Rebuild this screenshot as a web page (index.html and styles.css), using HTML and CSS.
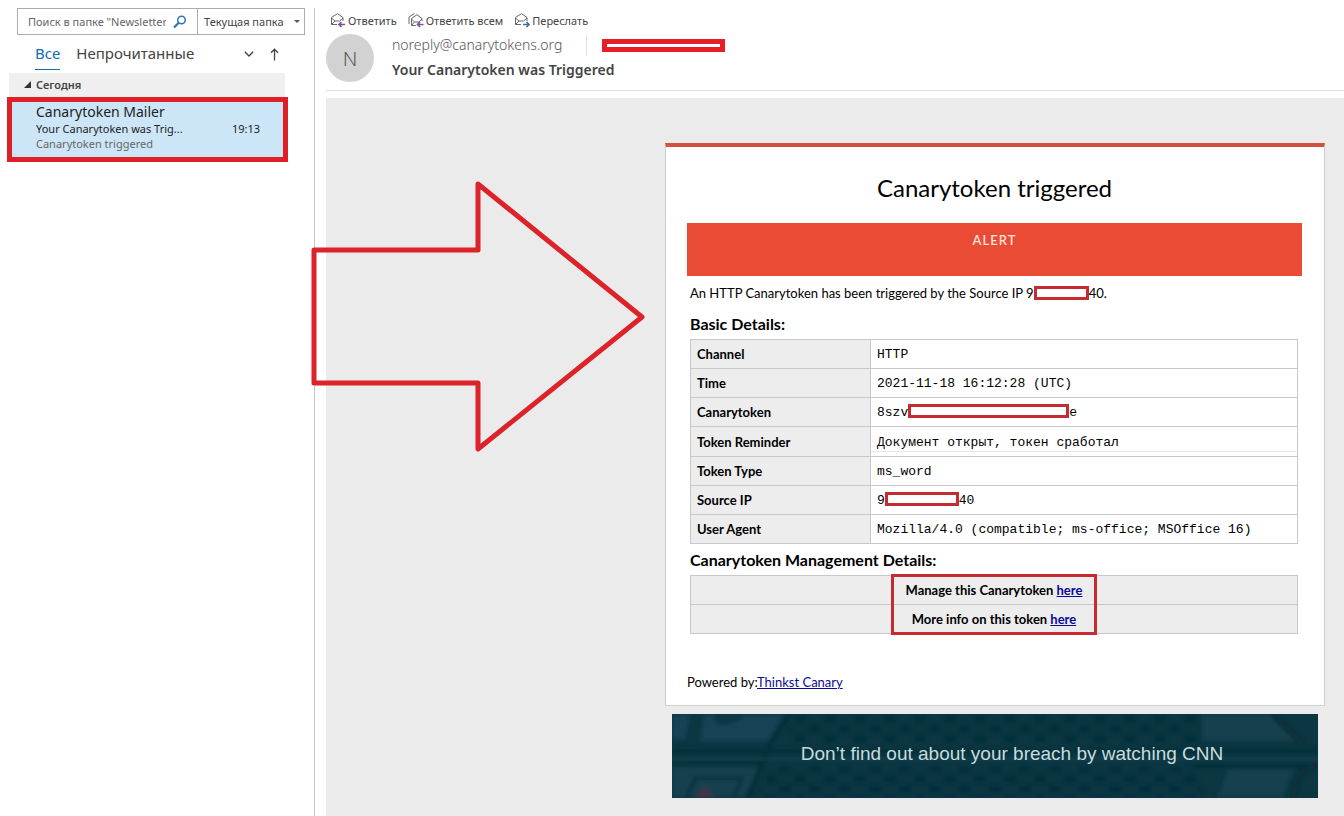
FILE: index.html
```html
<!DOCTYPE html>
<html lang="ru">
<head>
    <meta charset="UTF-8">
    <meta name="viewport" content="width=device-width, initial-scale=1.0">
    <title>Your Canarytoken was Triggered</title>
    <link rel="stylesheet" href="styles.css">
</head>
<body>
    <aside class="sidebar">
        <form class="search">
            <input class="search-input" type="text" aria-label="Поиск" placeholder="Поиск в папке &quot;Newsletters&quot;">
            <button class="search-button" type="button" aria-label="Найти">
                <svg width="14" height="14" viewBox="0 0 14 14" fill="none" stroke="#2e74b5">
                    <circle cx="8.5" cy="5" r="3.8" stroke-width="1.5"/>
                    <path d="M5.7 7.8L1 12.5" stroke-width="2.2"/>
                </svg>
            </button>
            <div class="scope">
                <select class="scope-select" aria-label="Где искать">
                    <option>Текущая папка</option>
                </select>
                <svg class="scope-arrow" width="6" height="3" viewBox="0 0 6 3"><path d="M0 0h6L3 3z" fill="#555"/></svg>
            </div>
        </form>

        <div class="tabs">
            <button class="tab active" type="button">Все</button>
            <button class="tab" type="button">Непрочитанные</button>
            <button class="sort first" type="button" aria-label="Упорядочить">
                <svg width="10" height="6" viewBox="0 0 10 6" fill="none" stroke="#444" stroke-width="1.4"><path d="M.8.8L5 5 9.2.8"/></svg>
            </button>
            <button class="sort" type="button" aria-label="По возрастанию">
                <svg width="9" height="13" viewBox="0 0 9 13" fill="none" stroke="#444" stroke-width="1.3"><path d="M4.5 12.5V1.2M1 4.7L4.5 1.2 8 4.7"/></svg>
            </button>
        </div>

        <div class="group">
            <svg width="7" height="7" viewBox="0 0 7 7"><path d="M7 0v7H0z" fill="#333"/></svg>
            <span>Сегодня</span>
        </div>

        <a class="message" href="#mail">
            <span class="message-from">Canarytoken Mailer</span>
            <span class="message-row">
                <span>Your Canarytoken was Trig...</span>
                <span class="message-time">19:13</span>
            </span>
            <span class="message-preview">Canarytoken triggered</span>
        </a>
    </aside>

    <main class="reading" id="mail">
        <header class="mail-header">
            <div class="actions">
                <button class="action" type="button">
                    <svg width="16" height="15" viewBox="0 0 16 15" fill="none">
                        <path d="M7 11.5H1.500V4.500L7.500.7l5.500 3.800V8M1.500 5l3.500 3h4.500L13 5M1.500 11.500L5 8" stroke="#666"/>
                        <path d="M15 11.500H9M11.500 9L9 11.500l2.500 2.500" stroke="#7a52a0" stroke-width="1.700"/>
                    </svg>
                    Ответить
                </button>
                <button class="action" type="button">
                    <svg width="16" height="15" viewBox="0 0 16 15" fill="none">
                        <path d="M8 12.500H3.500V5.500L9 1.700l5 3.800V8M3.500 6l3 3h4.500L14 6M3.500 12.500L6.500 9M1 11V4L6.500.5" stroke="#666"/>
                        <path d="M15.500 11.500h-6M12 9l-2.500 2.500L12 14" stroke="#7a52a0" stroke-width="1.700"/>
                    </svg>
                    Ответить всем
                </button>
                <button class="action" type="button">
                    <svg width="16" height="15" viewBox="0 0 16 15" fill="none">
                        <path d="M7 11.500H1.500V4.500L7.500.7l5.500 3.800V8M1.500 5l3.500 3h4.500L13 5M1.500 11.500L5 8" stroke="#666"/>
                        <path d="M9 11.500h6M12.500 9l2.500 2.500-2.500 2.500" stroke="#41719c" stroke-width="1.700"/>
                    </svg>
                    Переслать
                </button>
            </div>
            <div class="sender">
                <div class="avatar">N</div>
                <div class="sender-text">
                    <div class="sender-row">
                        <span class="sender-mail">noreply@canarytokens.org</span>
                        <span class="hidden-name"></span>
                    </div>
                    <h1 class="subject">Your Canarytoken was Triggered</h1>
                </div>
            </div>
        </header>

        <section class="mail-body">
            <article class="card">
                <h2 class="card-title">Canarytoken triggered</h2>
                <div class="alert">ALERT</div>

                <div class="details">
                    <p class="intro">An HTTP Canarytoken has been triggered by the Source IP 9<span class="hidden-data ip-short"></span>40.</p>

                    <h3 class="details-title">Basic Details:</h3>
                    <table class="data">
                        <tr><th scope="row">Channel</th><td>HTTP</td></tr>
                        <tr><th scope="row">Time</th><td>2021-11-18 16:12:28 (UTC)</td></tr>
                        <tr><th scope="row">Canarytoken</th><td>8szv<span class="hidden-data token"></span>e</td></tr>
                        <tr><th scope="row">Token Reminder</th><td class="reminder">Документ открыт, токен сработал</td></tr>
                        <tr><th scope="row">Token Type</th><td>ms_word</td></tr>
                        <tr><th scope="row">Source IP</th><td>9<span class="hidden-data ip"></span>40</td></tr>
                        <tr><th scope="row">User Agent</th><td>Mozilla/4.0 (compatible; ms-office; MSOffice 16)</td></tr>
                    </table>

                    <h3 class="details-title">Canarytoken Management Details:</h3>
                    <div class="manage">
                        <table class="data">
                            <tr><th class="manage-cell">Manage this Canarytoken <a href="#manage">here</a></th></tr>
                            <tr><th class="manage-cell">More info on this token <a href="#info">here</a></th></tr>
                        </table>
                        <div class="manage-mark"></div>
                    </div>
                </div>

                <p class="powered">Powered by:<a href="#canary">Thinkst Canary</a></p>
            </article>

            <div class="banner">
                <svg class="banner-art" viewBox="0 0 646 84" preserveAspectRatio="none" aria-hidden="true">
                    <defs>
                        <filter id="soft"><feGaussianBlur stdDeviation="2"/></filter>
                        <pattern id="cells" width="30" height="20" patternUnits="userSpaceOnUse">
                            <ellipse cx="8" cy="5" rx="7" ry="4" fill="#062f3b"/>
                            <ellipse cx="23" cy="15" rx="7" ry="4" fill="#062f3b"/>
                        </pattern>
                    </defs>
                    <rect width="646" height="84" fill="#0b3642"/>
                    <g filter="url(#soft)">
                        <path d="M125 0h400v28H110z" fill="url(#cells)"/>
                        <path d="M100 53h420l15 31H85z" fill="url(#cells)"/>
                        <path d="M0 0h18l-5 26H0zM32 0h80L96 27H28z" fill="#184355"/>
                        <path d="M42 0h30q-8 14-28 10z" fill="#0e3542"/>
                        <path d="M0 52h90L72 84H0z" fill="#173f4e"/>
                        <path d="M14 84l10-20h46l-9 20" fill="none" stroke="#0c3340" stroke-width="4"/>
                        <path d="M24 84l8-12 11 12z" fill="#44304a"/>
                        <path d="M0 37h646M0 50h90M520 52h126M118 0L98 30 76 84" fill="none" stroke="#052d38" stroke-width="4"/>
                        <path d="M530 0h75l22 27h-97zM545 84l12-29h65l-12 29z" fill="#123f4e"/>
                        <path d="M600 0l30 30M646 50q-24 5-24 34" fill="none" stroke="#082d39" stroke-width="5"/>
                        <path d="M0 45h646" stroke="#113f4b" stroke-width="3"/>
                    </g>
                </svg>
                <span class="banner-text">Don’t find out about your breach by watching CNN</span>
            </div>
        </section>
    </main>

    <svg class="big-arrow" width="336" height="272" viewBox="0 0 336 272" fill="none" aria-hidden="true">
        <path d="M4 69H168V3L332 136 168 268V202H4z" stroke="#dc2329" stroke-width="5" stroke-linejoin="round"/>
    </svg>
</body>
</html>
```
FILE: styles.css
```css
* {
    box-sizing: border-box;
}

body {
    display: flex;
    min-height: 100vh;
    margin: 0;
    position: relative;
    background-color: #FFFFFF;
    color: #444444;
    font-family: "Noto Sans", "Open Sans", sans-serif;
}

button,
input,
select {
    margin: 0;
    padding: 0;
    border: none;
    background: none;
    color: inherit;
    font-family: inherit;
}

button {
    cursor: pointer;
}

svg {
    display: block;
    flex: none;
}

/* message list */
.sidebar {
    flex: none;
    width: 315px;
    margin-top: 8px;
    border-right: 1px solid #C8C8C8;
}

.search {
    display: flex;
    height: 27px;
    margin: 0 9px 0 17px;
    border: 1px solid #ABABAB;
}

.search-input {
    flex: 1;
    min-width: 0;
    padding-left: 10px;
    font-size: 11px;
}

.search-input::placeholder {
    color: #666666;
}

.search-button {
    padding: 0 10px 0 7px;
}

.scope {
    display: flex;
    align-items: center;
    width: 107px;
    padding: 0 4px 0 6px;
    border-left: 1px solid #ABABAB;
}

.scope-select {
    flex: 1;
    min-width: 0;
    appearance: none;
    font-size: 11px;
}

.tabs {
    display: flex;
    align-items: center;
    height: 38px;
    padding: 0 35px;
}

.tab {
    height: 32px;
    margin-right: 16px;
    padding-bottom: 2px;
    border-bottom: 1px solid transparent;
    font-size: 15px;
}

.tab.active {
    border-color: #0F6FA8;
    color: #0F6FA8;
}

.sort.first {
    margin-left: auto;
    margin-right: 16px;
}

.group {
    display: flex;
    align-items: center;
    gap: 5px;
    height: 24px;
    margin: 0 29px 0 9px;
    padding: 0 0 2px 15px;
    background-color: #EFEFEF;
    font-size: 11px;
    font-weight: 600;
}

.message {
    display: flex;
    flex-direction: column;
    margin: 0 26px 0 7px;
    padding: 1px 23px 6px 24px;
    border: 5px solid #DF1F26;
    background-color: #CDE6F7;
    color: #222222;
    font-size: 11px;
    line-height: 15px;
    text-decoration: none;
}

.message-from {
    font-size: 14px;
    line-height: 18px;
}

.message-row {
    display: flex;
    justify-content: space-between;
}

.message-preview {
    color: #666666;
}

/* reading pane */
.reading {
    display: flex;
    flex: 1;
    flex-direction: column;
    min-width: 0;
    padding-left: 11px;
}

.mail-header {
    margin-bottom: 7px;
    padding: 11px 0 8px;
    border-bottom: 1px solid #E1E1E1;
}

.actions {
    display: flex;
    gap: 11px;
    padding-left: 4px;
}

.action {
    display: flex;
    align-items: center;
    gap: 2px;
    height: 18px;
    font-size: 11px;
}

.sender {
    display: flex;
    gap: 18px;
    margin-top: 5px;
}

.avatar {
    display: flex;
    align-items: center;
    justify-content: center;
    width: 48px;
    height: 48px;
    border-radius: 50%;
    background-color: #D2D2D2;
    color: #555555;
    font-size: 20px;
    font-weight: 300;
}

.sender-row {
    display: flex;
    align-items: center;
    height: 22px;
}

.sender-mail {
    padding-right: 24px;
    border-right: 1px solid #E1E1E1;
    color: #555555;
    font-size: 14px;
    font-weight: 300;
    line-height: 22px;
}

.hidden-name {
    width: 123px;
    height: 13px;
    margin-left: 15px;
    border: 5px solid #E81D25;
}

.subject {
    margin: 3px 0 0;
    font-size: 14px;
    font-weight: 600;
    line-height: 22px;
}

.mail-body {
    display: flex;
    flex: 1;
    flex-direction: column;
    align-items: flex-end;
    padding: 45px 19px 18px;
    background-color: #EBEBEB;
}

.card {
    width: 100%;
    max-width: 660px;
    padding: 23px 22px 13px 21px;
    border: 1px solid #CFCFCF;
    border-top: 4px solid #D4503F;
    background-color: #FFFFFF;
    color: #000000;
    font-family: Lato, sans-serif;
    font-size: 13px;
}

.card a {
    color: #0A0A9C;
}

.card-title {
    margin: 0 0 17px;
    font-size: 24px;
    font-weight: 400;
    line-height: 36px;
    text-align: center;
}

.alert {
    height: 53px;
    padding-top: 7px;
    background-color: #E94B35;
    color: #FCE3DC;
    font-weight: 600;
    letter-spacing: 1px;
    line-height: 20px;
    text-align: center;
}

.details {
    padding: 0 4px 0 3px;
}

.intro {
    margin: 7px 0 10px;
    line-height: 20px;
}

.details-title {
    margin: 5px 0 4px;
    font-size: 16px;
    font-weight: 700;
    line-height: 22px;
}

.hidden-data {
    display: inline-block;
    height: 14px;
    border: 3px solid #C52B31;
    background-color: #FFFFFF;
    vertical-align: -2px;
}

.ip-short {
    width: 55px;
}

.token {
    width: 161px;
}

.ip {
    width: 74px;
}

.data {
    width: 100%;
    border-collapse: collapse;
}

.data th,
.data td {
    height: 29px;
    padding: 0 6px;
    border: 1px solid #C8C8C8;
    line-height: 20px;
    text-align: left;
}

.data th {
    width: 180px;
    background-color: #EDEDED;
    font-weight: 700;
}

.data td {
    padding-top: 2px;
    font-family: "Liberation Mono", monospace;
}

.data .reminder {
    height: 30px;
    background: linear-gradient(#E8E8E8, #E8E8E8) 0 24px / 100% 1px no-repeat;
}

.data .manage-cell {
    text-align: center;
}

.manage {
    position: relative;
}

.manage-mark {
    position: absolute;
    top: -1px;
    right: 0;
    bottom: -1px;
    left: 0;
    width: 206px;
    margin: 0 auto;
    border: 3px solid #C52B31;
    pointer-events: none;
}

.powered {
    margin: 38px 0 0;
    line-height: 20px;
}

.banner {
    display: flex;
    align-items: center;
    justify-content: center;
    position: relative;
    width: 100%;
    max-width: 646px;
    height: 84px;
    margin: 8px 7px 0 0;
    background-color: #0C3744;
}

.banner-art {
    position: absolute;
    width: 100%;
    height: 100%;
}

.banner-text {
    position: relative;
    margin: 0 0 4px 34px;
    color: #C9DCDD;
    font-family: "Liberation Sans", Arial, sans-serif;
    font-size: 19px;
}

/* pointer from the list to the letter */
.big-arrow {
    position: absolute;
    top: 181px;
    left: 310px;
    pointer-events: none;
}
```
